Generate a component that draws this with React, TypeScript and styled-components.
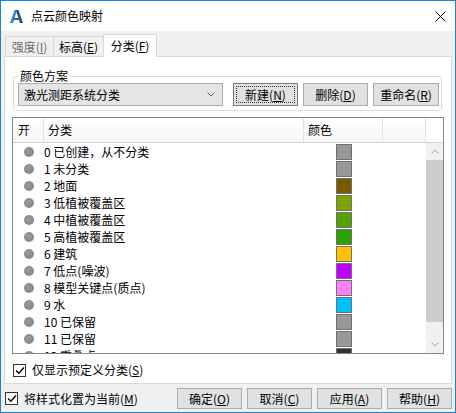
import styled, { createGlobalStyle } from "styled-components";

const GlobalStyle = createGlobalStyle`
  html, body {
    margin: 0;
    padding: 0;
    background: #fff;
  }
  body {
    font-family: "Noto Sans CJK SC", "Noto Sans", sans-serif;
    font-size: 12px;
    color: #000;
  }
  * {
    box-sizing: border-box;
  }
`;

const Window = styled.div`
  width: 456px;
  height: 413px;
  border: 1px solid #1883d7;
  display: flex;
  flex-direction: column;
  background: #f0f0f0;
  overflow: hidden;
`;

const TitleBar = styled.div`
  height: 30px;
  flex-shrink: 0;
  display: flex;
  align-items: center;
  padding-left: 9px;
  background: #fff;
`;

const Title = styled.span`
  margin-left: 8px;
  line-height: 16px;
`;

const CloseButton = styled.div`
  width: 30px;
  height: 30px;
  margin-left: auto;
  display: flex;
  align-items: center;
  justify-content: center;
`;

const Body = styled.div`
  flex: 1;
  padding: 3px 0 0 3px;
  display: flex;
  flex-direction: column;
`;

const TabStrip = styled.div`
  height: 22px;
  padding-left: 1px;
  display: flex;
  align-items: flex-end;
`;

const Tab = styled.div<{ $active?: boolean; $disabled?: boolean; $width: number }>`
  position: relative;
  z-index: ${(p) => (p.$active ? 1 : 0)};
  width: ${(p) => p.$width}px;
  height: ${(p) => (p.$active ? 23 : 20)}px;
  margin-bottom: ${(p) => (p.$active ? -1 : 0)}px;
  margin-left: -1px;
  display: flex;
  align-items: center;
  justify-content: center;
  border: 1px solid #d9d9d9;
  border-bottom: none;
  background: ${(p) => (p.$active ? "#fff" : "#f0f0f0")};
  color: ${(p) => (p.$disabled ? "#6d6d6d" : "#000")};
  line-height: 16px;

  &:first-child {
    margin-left: 0;
  }
`;

const TabPanel = styled.div`
  width: 448px;
  height: 328px;
  border: 1px solid #d9d9d9;
  background: #fff;
  display: flex;
  flex-direction: column;
`;

const GroupBox = styled.fieldset`
  margin: 12px 9px 0 8px;
  padding: 0 2px 4px 4px;
  min-width: 0;
  border: 1px solid #dcdcdc;
  border-radius: 3px;
`;

const Legend = styled.legend`
  padding: 0 2px;
  line-height: 14px;
`;

const SchemeRow = styled.div`
  height: 23px;
  display: flex;
  align-items: center;
`;

const Combo = styled.div`
  width: 205px;
  height: 23px;
  padding: 0 7px 0 5px;
  display: flex;
  align-items: center;
  justify-content: space-between;
  border: 1px solid #acacac;
  background: #e5e5e5;
  line-height: 16px;
`;

const Button = styled.div<{ $width: number; $height: number; $gap: number; $focused?: boolean }>`
  position: relative;
  width: ${(p) => p.$width}px;
  height: ${(p) => p.$height}px;
  margin-left: ${(p) => p.$gap}px;
  display: flex;
  align-items: center;
  justify-content: center;
  border: 1px solid ${(p) => (p.$focused ? "#7a7a7a" : "#adadad")};
  background: #e1e1e1;
  line-height: 16px;

  &::after {
    content: "";
    display: ${(p) => (p.$focused ? "block" : "none")};
    position: absolute;
    inset: 2px;
    border: 1px dotted #333;
  }
`;

const Key = styled.u`
  text-decoration: underline;
  text-underline-offset: 1px;
`;

const ListView = styled.div`
  margin: 6px 7px 0;
  height: 237px;
  border: 1px solid #828790;
  display: flex;
  flex-direction: column;
`;

const HeaderRow = styled.div`
  height: 25px;
  flex-shrink: 0;
  display: flex;
  border-bottom: 1px solid #d5d5d5;
  background: linear-gradient(#ffffff, #f4f5f7);
`;

const HeaderCell = styled.div<{ $width: number }>`
  width: ${(p) => p.$width}px;
  padding-left: 4px;
  display: flex;
  align-items: center;
  border-right: 1px solid #e3e3e3;
  line-height: 16px;

  &:first-child {
    padding-left: 5px;
  }
`;

const HeaderFiller = styled.div`
  flex: 1;
  background: #fff;
`;

const ListBody = styled.div`
  flex: 1;
  display: flex;
  overflow: hidden;
`;

const Rows = styled.div`
  width: 413px;
  overflow: hidden;
`;

const Row = styled.div`
  height: 17px;
  display: flex;
  align-items: center;
`;

const BulletCell = styled.div`
  width: 31px;
  display: flex;
  justify-content: center;
`;

const Bullet = styled.div`
  width: 10px;
  height: 10px;
  border-radius: 50%;
  background: radial-gradient(circle at 45% 40%, #9a9a9a, #808080);
`;

const NameCell = styled.div`
  width: 260px;
  line-height: 17px;
  white-space: nowrap;
`;

const ColorCell = styled.div`
  width: 79px;
  height: 17px;
  display: flex;
  justify-content: center;
  align-items: flex-start;
  padding-top: 1px;
`;

const Swatch = styled.div<{ $color: string }>`
  width: 16px;
  height: 16px;
  border: 1px solid #707070;
  background: ${(p) => p.$color};
`;

const ScrollBar = styled.div`
  width: 17px;
  display: flex;
  flex-direction: column;
  background: #f0f0f0;
`;

const ScrollArrow = styled.div`
  height: 17px;
  display: flex;
  align-items: center;
  justify-content: center;
`;

const ScrollThumb = styled.div`
  height: 162px;
  background: #cdcdcd;
`;

const ScrollTrack = styled.div`
  flex: 1;
`;

const CheckRow = styled.label<{ $top: number; $left: number }>`
  margin-top: ${(p) => p.$top}px;
  padding-left: ${(p) => p.$left}px;
  display: flex;
  align-items: center;
  gap: 6px;
  line-height: 16px;
`;

const CheckLabel = styled.span`
  white-space: nowrap;
`;

const CheckBox = styled.span`
  width: 13px;
  height: 13px;
  flex-shrink: 0;
  border: 1px solid #333;
  background: #fff;
  display: flex;
  align-items: center;
  justify-content: center;
`;

const Footer = styled.div`
  width: 448px;
  height: 21px;
  margin-top: 4px;
  display: flex;
  align-items: center;
`;

const FooterButtons = styled.div`
  margin-left: auto;
  display: flex;
`;

const classes = [
  { name: "0 已创建，从不分类", color: "#999999" },
  { name: "1 未分类", color: "#999999" },
  { name: "2 地面", color: "#7a5a00" },
  { name: "3 低植被覆盖区", color: "#7ba400" },
  { name: "4 中植被覆盖区", color: "#52a300" },
  { name: "5 高植被覆盖区", color: "#2aa300" },
  { name: "6 建筑", color: "#ffc000" },
  { name: "7 低点(噪波)", color: "#bf00ff" },
  { name: "8 模型关键点(质点)", color: "#ff80ff" },
  { name: "9 水", color: "#00bfff" },
  { name: "10 已保留", color: "#999999" },
  { name: "11 已保留", color: "#999999" },
  { name: "12 重叠点", color: "#333333" },
];

const Check = () => (
  <CheckBox>
    <svg width="10" height="9" viewBox="0 0 10 9">
      <polyline points="1,4.5 3.8,7.3 9,1.5" fill="none" stroke="#000" strokeWidth="1.4" />
    </svg>
  </CheckBox>
);

const Chevron = ({ up, color }: { up?: boolean; color: string }) => (
  <svg width="8" height="5" viewBox="0 0 8 5">
    <polyline
      points={up ? "0.5,4.5 4,1 7.5,4.5" : "0.5,0.5 4,4 7.5,0.5"}
      fill="none"
      stroke={color}
      strokeWidth="1"
    />
  </svg>
);

const AppLogo = () => (
  <svg width="13" height="13" viewBox="0 0 13 13">
    <polygon points="4.6,0 7.2,0 3,13 0,13" fill="#3d86c9" />
    <polygon points="5.8,0 8.4,0 13,13 10,13" fill="#1d4f87" />
    <polygon points="3.6,8 9.6,8 10.3,10 2.9,10" fill="#2a66a8" />
  </svg>
);

const App = () => {
  return (
    <>
      <GlobalStyle />
      <Window>
        <TitleBar>
          <AppLogo />
          <Title>点云颜色映射</Title>
          <CloseButton>
            <svg width="11" height="11" viewBox="0 0 11 11">
              <path d="M0.5 0.5 L10.5 10.5 M10.5 0.5 L0.5 10.5" stroke="#000" strokeWidth="1" />
            </svg>
          </CloseButton>
        </TitleBar>
        <Body>
          <TabStrip>
            <Tab $width={49} $disabled>
              强度(<Key>I</Key>)
            </Tab>
            <Tab $width={51}>
              标高(<Key>E</Key>)
            </Tab>
            <Tab $width={54} $active>
              分类(<Key>F</Key>)
            </Tab>
          </TabStrip>
          <TabPanel>
            <GroupBox>
              <Legend>颜色方案</Legend>
              <SchemeRow>
                <Combo>
                  激光测距系统分类
                  <Chevron color="#606060" />
                </Combo>
                <Button $width={65} $height={23} $gap={10} $focused>
                  新建(<Key>N</Key>)
                </Button>
                <Button $width={65} $height={23} $gap={5}>
                  删除(<Key>D</Key>)
                </Button>
                <Button $width={66} $height={23} $gap={5}>
                  重命名(<Key>R</Key>)
                </Button>
              </SchemeRow>
            </GroupBox>
            <ListView>
              <HeaderRow>
                <HeaderCell $width={31}>开</HeaderCell>
                <HeaderCell $width={260}>分类</HeaderCell>
                <HeaderCell $width={79}>颜色</HeaderCell>
                <HeaderCell $width={43} />
                <HeaderFiller />
              </HeaderRow>
              <ListBody>
                <Rows>
                  {classes.map((c) => (
                    <Row key={c.name}>
                      <BulletCell>
                        <Bullet />
                      </BulletCell>
                      <NameCell>{c.name}</NameCell>
                      <ColorCell>
                        <Swatch $color={c.color} />
                      </ColorCell>
                    </Row>
                  ))}
                </Rows>
                <ScrollBar>
                  <ScrollArrow>
                    <Chevron up color="#a3a3a3" />
                  </ScrollArrow>
                  <ScrollThumb />
                  <ScrollTrack />
                  <ScrollArrow>
                    <Chevron color="#a3a3a3" />
                  </ScrollArrow>
                </ScrollBar>
              </ListBody>
            </ListView>
            <CheckRow $top={8} $left={8}>
              <Check />
              <CheckLabel>
                仅显示预定义分类(<Key>S</Key>)
              </CheckLabel>
            </CheckRow>
          </TabPanel>
          <Footer>
            <CheckRow $top={0} $left={1}>
              <Check />
              <CheckLabel>
                将样式化置为当前(<Key>M</Key>)
              </CheckLabel>
            </CheckRow>
            <FooterButtons>
              <Button $width={65} $height={21} $gap={0}>
                确定(<Key>O</Key>)
              </Button>
              <Button $width={65} $height={21} $gap={5}>
                取消(<Key>C</Key>)
              </Button>
              <Button $width={65} $height={21} $gap={5}>
                应用(<Key>A</Key>)
              </Button>
              <Button $width={65} $height={21} $gap={5}>
                帮助(<Key>H</Key>)
              </Button>
            </FooterButtons>
          </Footer>
        </Body>
      </Window>
    </>
  );
};

export default App;
